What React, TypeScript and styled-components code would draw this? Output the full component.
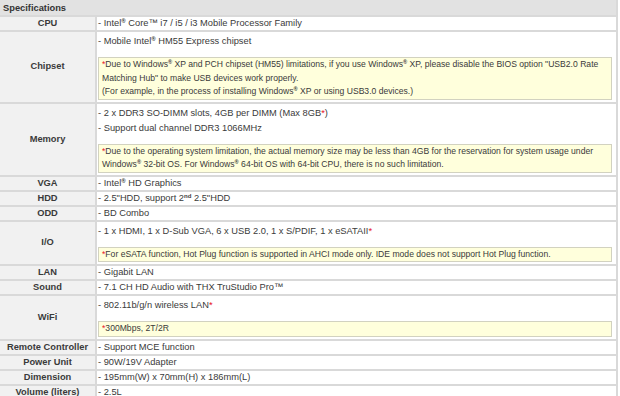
import React from "react";
import styled, { createGlobalStyle } from "styled-components";

const Global = createGlobalStyle`
  html, body { margin: 0; padding: 0; background: #ffffff; }
  body { font-family: "Liberation Sans", Arial, sans-serif; color: #333; }
`;

const Table = styled.div`
  width: 616px;
  display: grid;
  grid-template-columns: 95px 1fr;
  column-gap: 2px;
  row-gap: 2px;
  background: #d9d9d9;
  border-right: 2px solid #d9d9d9;
  font-size: 9.3px;
`;

const Header = styled.div`
  grid-column: 1 / -1;
  background: #e2e2e2;
  font-weight: bold;
  color: #333;
  height: 15px;
  line-height: 16px;
  padding-left: 3px;
`;

const Label = styled.div`
  background: #f1f1f1;
  font-weight: bold;
  color: #3a3a3a;
  display: flex;
  align-items: center;
  justify-content: center;
  text-align: center;
  line-height: 13px;
  white-space: nowrap;
`;

const Value = styled.div<{ $multi?: boolean }>`
  background: #ffffff;
  color: #3a3a3a;
  padding: ${(p) => (p.$multi ? "2px 4px 1px 1px" : "0 4px 0 1px")};
  line-height: ${(p) => (p.$multi ? "15px" : "13px")};
  min-height: 13px;
`;

const Note = styled.div`
  margin-top: 8px;
  margin-bottom: 1px;
  background: #ffffdc;
  border: 1px solid #d2d2c0;
  padding: 0 3px;
  font-size: 8.6px;
  line-height: 13.5px;
  color: #3a3a3a;
`;

const Star = styled.span`
  color: #e8141e;
`;

const Sup = styled.sup`
  font-size: 0.65em;
  line-height: 0;
  vertical-align: 0.55em;
  font-weight: bold;
`;

const R = () => <Sup>®</Sup>;

type Row = { label: string; value: React.ReactNode; multi?: boolean };

const rows: Row[] = [
  { label: "CPU", value: <>- Intel<R /> Core™ i7 / i5 / i3 Mobile Processor Family</> },
  {
    label: "Chipset",
    multi: true,
    value: (
      <>
        <div>- Mobile Intel<R /> HM55 Express chipset</div>
        <Note>
          <Star>*</Star>Due to Windows<R /> XP and PCH chipset (HM55) limitations, if you use Windows<R /> XP, please disable the BIOS option "USB2.0 Rate Matching Hub" to make USB devices work properly.
          <br />
          (For example, in the process of installing Windows<R /> XP or using USB3.0 devices.)
        </Note>
      </>
    ),
  },
  {
    label: "Memory",
    multi: true,
    value: (
      <>
        <div>- 2 x DDR3 SO-DIMM slots, 4GB per DIMM (Max 8GB<Star>*</Star>)</div>
        <div>- Support dual channel DDR3 1066MHz</div>
        <Note>
          <Star>*</Star>Due to the operating system limitation, the actual memory size may be less than 4GB for the reservation for system usage under Windows<R /> 32-bit OS. For Windows<R /> 64-bit OS with 64-bit CPU, there is no such limitation.
        </Note>
      </>
    ),
  },
  { label: "VGA", value: <>- Intel<R /> HD Graphics</> },
  { label: "HDD", value: <>- 2.5"HDD, support 2<Sup>nd</Sup> 2.5"HDD</> },
  { label: "ODD", value: <>- BD Combo</> },
  {
    label: "I/O",
    multi: true,
    value: (
      <>
        <div>- 1 x HDMI, 1 x D-Sub VGA, 6 x USB 2.0, 1 x S/PDIF, 1 x eSATAII<Star>*</Star></div>
        <Note>
          <Star>*</Star>For eSATA function, Hot Plug function is supported in AHCI mode only. IDE mode does not support Hot Plug function.
        </Note>
      </>
    ),
  },
  { label: "LAN", value: <>- Gigabit LAN</> },
  { label: "Sound", value: <>- 7.1 CH HD Audio with THX TruStudio Pro™</> },
  {
    label: "WiFi",
    multi: true,
    value: (
      <>
        <div>- 802.11b/g/n wireless LAN<Star>*</Star></div>
        <Note>
          <Star>*</Star>300Mbps, 2T/2R
        </Note>
      </>
    ),
  },
  { label: "Remote Controller", value: <>- Support MCE function</> },
  { label: "Power Unit", value: <>- 90W/19V Adapter</> },
  { label: "Dimension", value: <>- 195mm(W) x 70mm(H) x 186mm(L)</> },
  { label: "Volume (liters)", value: <>- 2.5L</> },
];

export default function App() {
  return (
    <>
      <Global />
      <Table>
        <Header>Specifications</Header>
        {rows.map((r) => (
          <React.Fragment key={r.label}>
            <Label>{r.label}</Label>
            <Value $multi={r.multi}>{r.value}</Value>
          </React.Fragment>
        ))}
      </Table>
    </>
  );
}
